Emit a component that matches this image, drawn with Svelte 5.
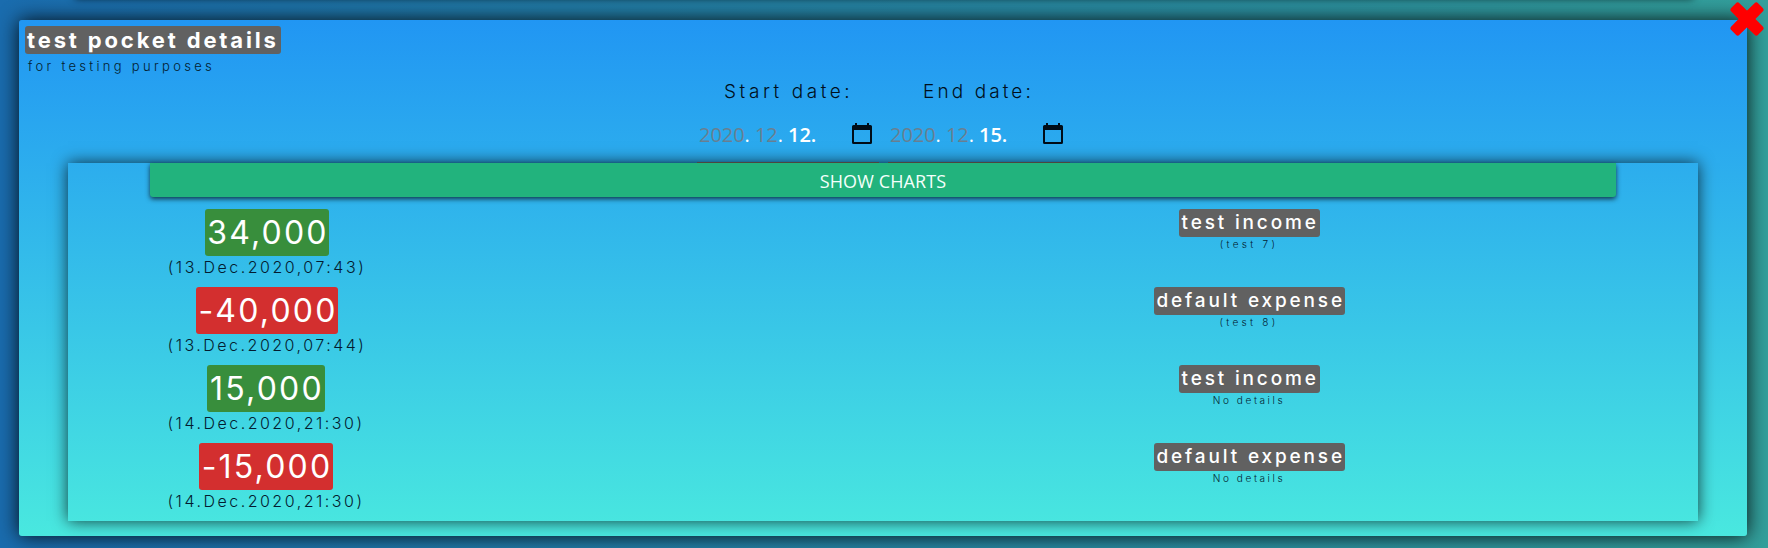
<script>
  const dates = [
    { label: 'Start date:', year: '2020', month: '12', day: '12', kind: 'start' },
    { label: 'End date:', year: '2020', month: '12', day: '15', kind: 'end' }
  ];
  const records = [
    { amount: '34,000', date: '(13.Dec.2020,07:43)', name: 'test income', note: '(test 7)', width: 124 },
    { amount: '-40,000', date: '(13.Dec.2020,07:44)', name: 'default expense', note: '(test 8)', width: 142 },
    { amount: '15,000', date: '(14.Dec.2020,21:30)', name: 'test income', note: 'No details', width: 118 },
    { amount: '-15,000', date: '(14.Dec.2020,21:30)', name: 'default expense', note: 'No details', width: 134 }
  ];
</script>

<div class="page">
  <div class="behind"></div>
  <main class="modal">
    <header>
      <h1>test pocket details</h1>
      <p>for testing purposes</p>
    </header>
    <section class="dates">
      {#each dates as d}
        <div class="field {d.kind}">
          <span class="label">{d.label}</span>
          <div class="input">
            <span class="value"><i>{d.year}</i>. <i>{d.month}</i>. <b>{d.day}.</b></span>
            <svg viewBox="0 0 20 21" width="20" height="21"><path fill-rule="evenodd" d="M3 0h2v2h10V0h2v2h1.500A1.500 1.500 0 0 1 20 3.500v16a1.500 1.500 0 0 1-1.500 1.500h-17A1.500 1.500 0 0 1 0 19.500v-16A1.500 1.500 0 0 1 1.500 2H3zM2 7v12h16V7z" /></svg>
          </div>
        </div>
      {/each}
    </section>
    <section class="panel">
      <button class="charts">SHOW CHARTS</button>
      {#each records as r}
        <article>
          <div class="left" class:narrow={r.amount.endsWith('15,000')}>
            <span class="amount" class:negative={r.amount.startsWith('-')} style="width:{r.width}px">{r.amount}</span>
            <span class="time">{r.date}</span>
          </div>
          <div class="right">
            <span class="name" class:long={r.name === 'default expense'}>{r.name}</span>
            <span class="note" class:empty={r.note === 'No details'}>{r.note}</span>
          </div>
        </article>
      {/each}
    </section>
    <svg class="close" viewBox="0 0 34 34" width="34" height="34"><path d="M8.500 8.500 25.500 25.500M25.500 8.500 8.500 25.500" stroke="#f00" stroke-width="11" fill="none" /><path d="M7.700 3 3 7.700 26.300 31 31 26.300zM26.300 3 31 7.700 7.700 31 3 26.300z" fill="#f00" stroke="#f00" stroke-width="5" stroke-linejoin="round" /></svg>
  </main>
</div>

<style>
  * { box-sizing: border-box; }
  .page {
    position: relative;
    height: 548px;
    padding: 20px 21px 12px 19px;
    overflow: hidden;
    background: linear-gradient(90deg, #1a6cae, #339f9b);
    font-family: "Inter", sans-serif;
    color: #031c30;
  }
  .behind { position: absolute; left: 75px; right: 75px; top: -40px; height: 38px; box-shadow: 0 0 8px rgba(0, 0, 0, .8); }
  .modal {
    position: relative;
    height: 516px;
    border-radius: 3px;
    background: linear-gradient(#2196f3, #49e8df);
    box-shadow: 0 0 20px rgba(0, 0, 0, .9);
  }
  header { height: 56px; padding: 6px 0 0 6px; }
  h1 {
    width: 256px; height: 28px; margin: 0; padding-left: 2px;
    border-radius: 3px; background: #616161; color: #fff;
    font-size: 22px; line-height: 28px; font-weight: 700; letter-spacing: 2.85px; white-space: nowrap;
  }
  p { margin: 3px 0 0 3px; font-size: 13px; line-height: 18px; letter-spacing: 3.3px; font-weight: 300; }
  .dates { height: 87px; display: flex; gap: 9px; padding-left: 678px; }
  .field { width: 182px; height: 87px; display: flex; flex-direction: column; border-bottom: 1px solid #887c70; }
  .label { padding: 4px 0 0 27px; height: 36px; line-height: 24px; font-size: 19px; font-weight: 300; letter-spacing: 3.55px; color: #000f1c; white-space: nowrap; }
  .end .label { padding-left: 35px; letter-spacing: 3.1px; }
  .input { display: flex; justify-content: space-between; padding: 10px 7px 0 2px; font-family: "Open Sans", sans-serif; }
  .value { color: #fff; font-size: 20px; line-height: 26px; letter-spacing: -.05px; font-weight: 500; white-space: nowrap; }
  .value i { font-style: normal; font-weight: 400; color: #697f91; }
  .value b { font-weight: 600; }
  .input svg { fill: #000d18; margin-top: 1px; }
  .panel { position: relative; width: 1630px; height: 358px; margin-left: 49px; box-shadow: 0 0 15px rgba(0, 0, 0, .75); }
  .charts {
    display: block; width: 1466px; height: 34px; margin: 0 0 12px 82px; padding: 2px 0 0; border: 0;
    border-radius: 0 0 3px 3px; background: #22b37d; color: #f4fffb;
    box-shadow: 0 2px 5px rgba(0, 0, 0, .7);
    font: 500 18px/30px "Open Sans", sans-serif; letter-spacing: .1px;
  }
  article { display: flex; justify-content: space-between; height: 78px; }
  .left { width: 398px; display: flex; flex-direction: column; align-items: center; }
  .narrow { padding-right: 2px; }
  .right { width: 898px; display: flex; flex-direction: column; align-items: center; }
  .amount { height: 47px; padding-left: 2px; border-radius: 3px; background: #388e3c; color: #fff; font-size: 32px; line-height: 47px; letter-spacing: 2.2px; text-align: center; white-space: nowrap; }
  .negative { background: #d32f2f; }
  .time { font-size: 16px; line-height: 22px; font-weight: 300; letter-spacing: 2.5px; white-space: nowrap; }
  .name { width: 141px; height: 28px; padding-left: 3px; border-radius: 3px; background: #616161; color: #fff; font-size: 19px; line-height: 28px; font-weight: 500; letter-spacing: 2.85px; text-align: left; white-space: nowrap; }
  .name.long { width: 191px; }
  .note { font-size: 10px; line-height: 14px; letter-spacing: 3.3px; font-weight: 300; white-space: nowrap; }
  .note.empty { letter-spacing: 2.6px; }
  .close { position: absolute; left: 1711px; top: -18px; }
</style>
